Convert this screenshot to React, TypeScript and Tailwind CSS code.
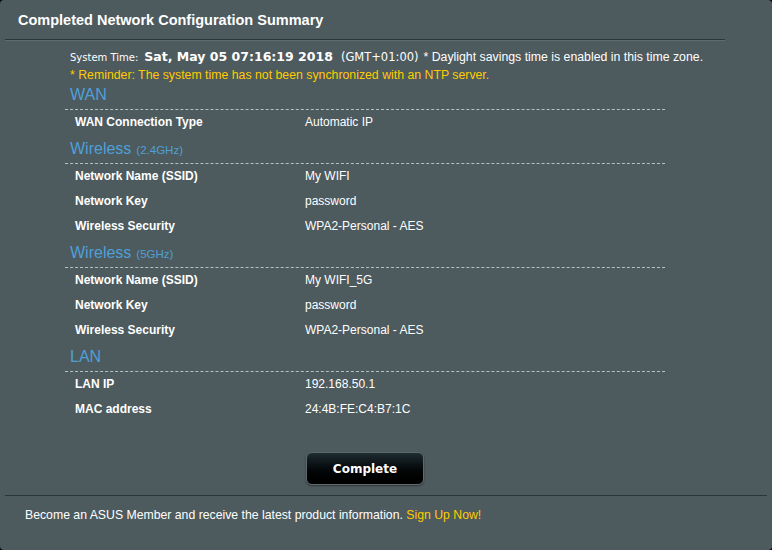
const rows24 = [
  ['Network Name (SSID)', 'My WIFI'],
  ['Network Key', 'password'],
  ['Wireless Security', 'WPA2-Personal - AES'],
];

const rows5 = [
  ['Network Name (SSID)', 'My WIFI_5G'],
  ['Network Key', 'password'],
  ['Wireless Security', 'WPA2-Personal - AES'],
];

function Header({ title, sub }: { title: string; sub?: string }) {
  return (
    <div className="h-[29px] border-b border-dashed border-[#b9bfc1] pl-[5px] pt-[2px] text-[#4fa0d8]">
      <span className="text-[16px] leading-[20px]">{title}</span>
      {sub && <span className="ml-[5px] text-[11.5px]">{sub}</span>}
    </div>
  );
}

function Row({ label, value }: { label: string; value: string }) {
  return (
    <div className="flex h-[25px] items-center text-[12px] text-white">
      <div className="w-[240px] pl-[10px] font-bold">{label}</div>
      <div>{value}</div>
    </div>
  );
}

export default function App() {
  return (
    <div className="h-[550px] w-[772px] bg-black font-['Liberation_Sans',Arial,sans-serif]">
      <div className="flex h-full flex-col rounded-[4px] bg-[#4d5a5e]">
        <div className="mx-[5px] h-[40px] w-[720px] border-b border-[#2c3639] pl-[13px] pt-[11px] text-[14.5px] font-bold leading-[18px] text-white shadow-[0_1px_0_#5f6b6f]">
          Completed Network Configuration Summary
        </div>

        <div className="ml-[70px] mt-[8px] flex items-baseline whitespace-nowrap text-[12.3px] text-white">
          <span className="font-['DejaVu_Sans',sans-serif] text-[10px]">System Time:</span>
          <span className="ml-[6px] font-['DejaVu_Sans',sans-serif] text-[12.5px] font-bold">Sat, May 05 07:16:19 2018</span>
          <span className="ml-[8px] font-['DejaVu_Sans',sans-serif] text-[11.5px]">(GMT+01:00)</span>
          <span className="ml-[5px]">* Daylight savings time is enabled in this time zone.</span>
        </div>
        <div className="ml-[70px] text-[12.3px] leading-[16px] text-[#ffcc00]">
          * Reminder: The system time has not been synchronized with an NTP server.
        </div>

        <div className="ml-[65px] mt-[-2px] w-[600px]">
          <Header title="WAN" />
          <Row label="WAN Connection Type" value="Automatic IP" />
          <Header title="Wireless" sub="(2.4GHz)" />
          {rows24.map(([l, v]) => (
            <Row key={l} label={l} value={v} />
          ))}
          <Header title="Wireless" sub="(5GHz)" />
          {rows5.map(([l, v]) => (
            <Row key={l} label={l} value={v} />
          ))}
          <Header title="LAN" />
          <Row label="LAN IP" value="192.168.50.1" />
          <Row label="MAC address" value="24:4B:FE:C4:B7:1C" />
        </div>

        <div className="mt-[30px] flex w-[730px] justify-center">
          <button className="h-[33px] w-[118px] rounded-[6px] border border-[#5e696c] bg-gradient-to-b from-[#1f2c31] to-black pt-[2px] font-['DejaVu_Sans',sans-serif] text-[12px] font-bold text-white shadow-[0_1px_2px_rgba(0,0,0,0.4)]">
            Complete
          </button>
        </div>

        <div className="mx-[5px] mt-[10px] border-t border-[#2c3639] shadow-[inset_0_1px_0_#5f6b6f]" />
        <div className="ml-[25px] mt-[10px] text-[12.25px] text-white">
          Become an ASUS Member and receive the latest product information.{' '}
          <span className="text-[#ffcc00]">Sign Up Now!</span>
        </div>
      </div>
    </div>
  );
}
